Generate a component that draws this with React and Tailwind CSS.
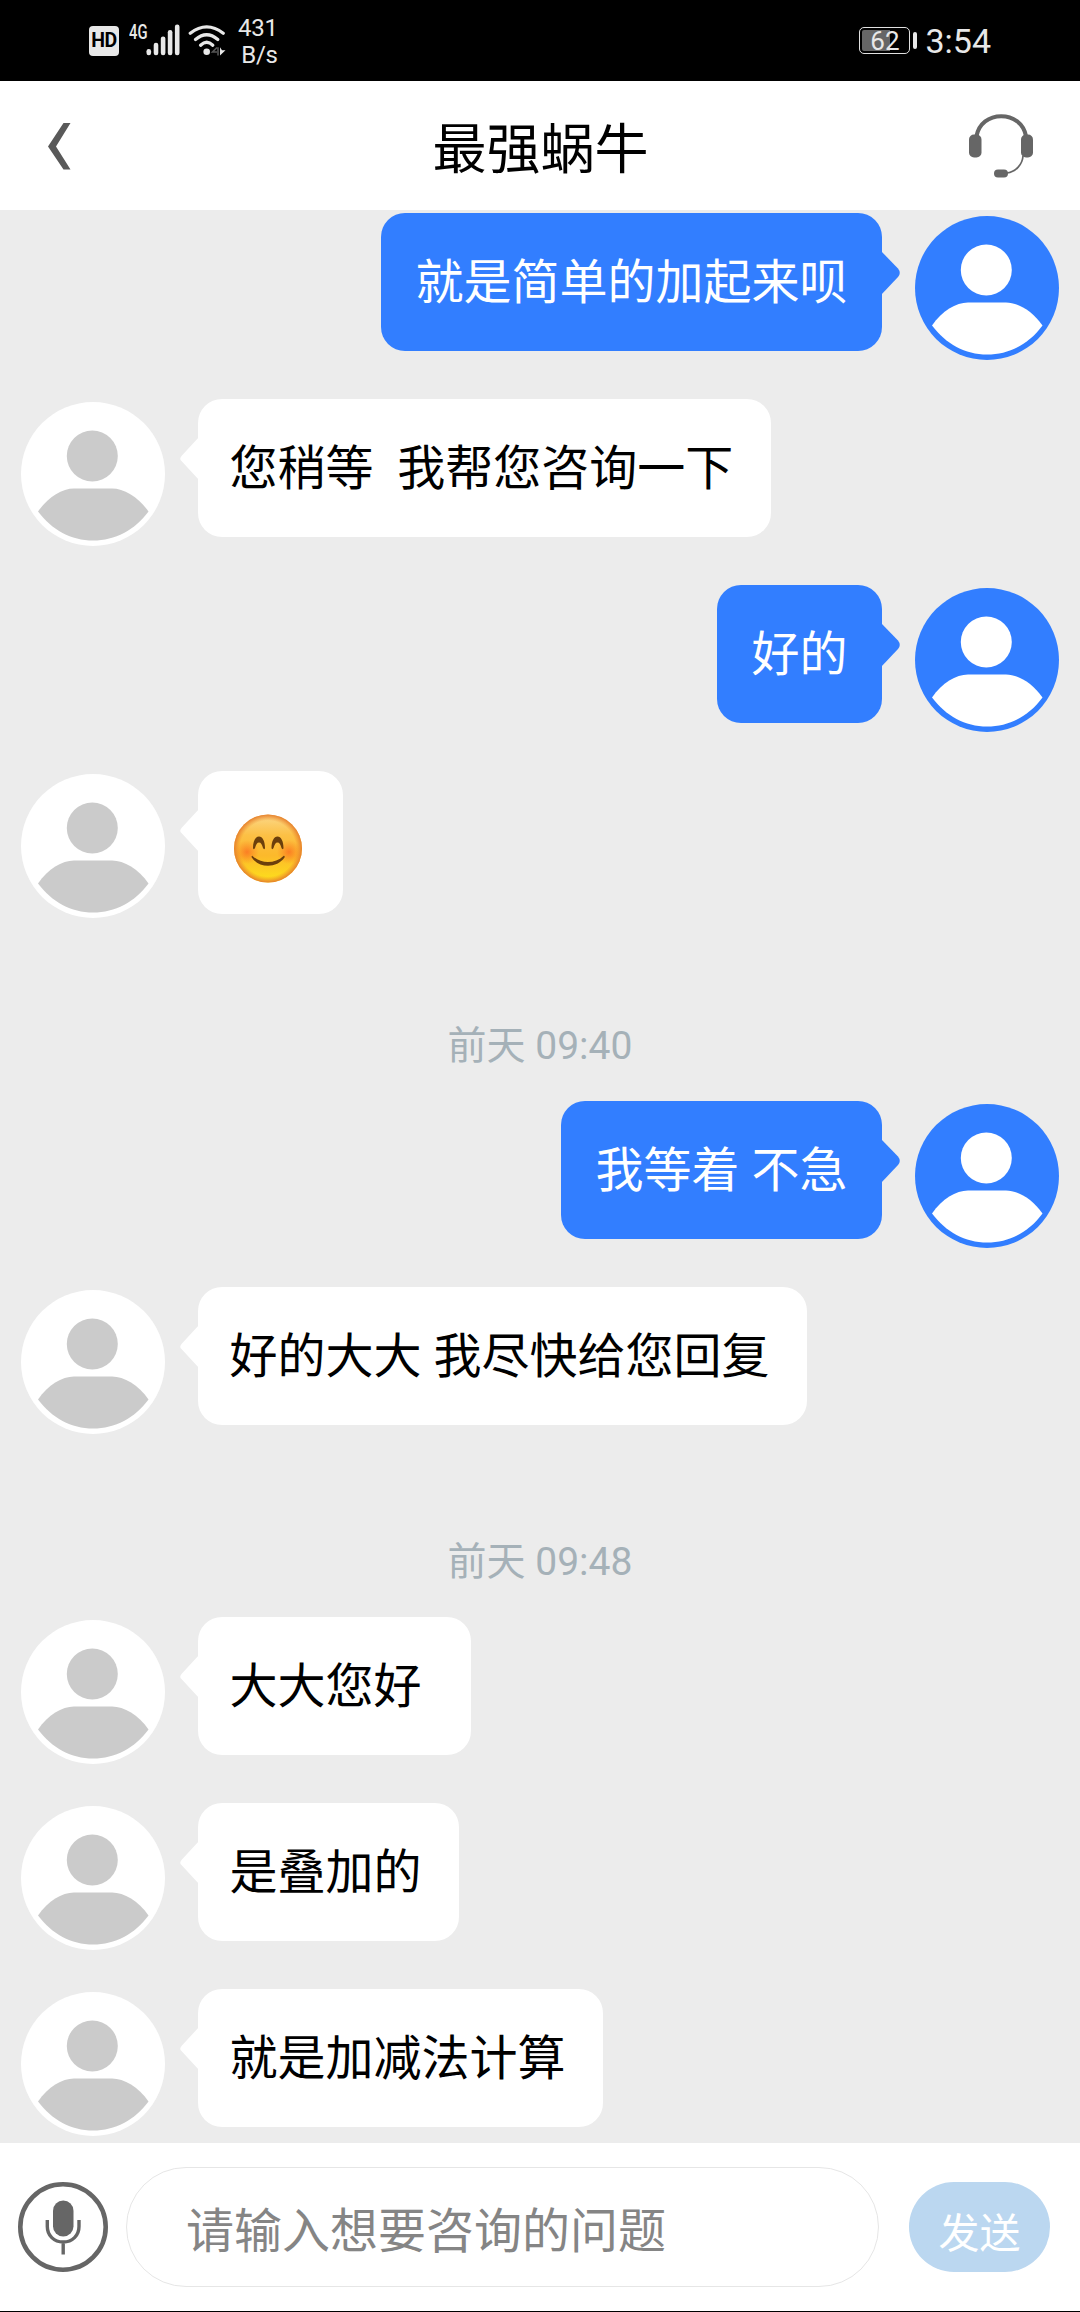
import clsx from "clsx";

const items = [
  { id: 1, type: "msg", mine: true, text: "就是简单的加起来呗" },
  { id: 2, type: "msg", text: "您稍等  我帮您咨询一下" },
  { id: 3, type: "msg", mine: true, text: "好的" },
  { id: 4, type: "emoji" },
  { id: 5, type: "time", text: "前天 09:40" },
  { id: 6, type: "msg", mine: true, text: "我等着 不急" },
  { id: 7, type: "msg", text: "好的大大 我尽快给您回复" },
  { id: 8, type: "time", text: "前天 09:48" },
  { id: 9, type: "msg", text: "大大您好 " },
  { id: 10, type: "msg", text: "是叠加的" },
  { id: 11, type: "msg", text: "就是加减法计算" },
];

function StatusBar() {
  return (
    <div className="flex h-[81px] shrink-0 justify-between bg-black pl-[89px] pr-[89px] text-[#e8e8e8]">
      <div className="flex">
        <div className="mt-[26px] flex h-[30px] w-[30px] items-center justify-center rounded-[4px] bg-[#e8e8e8] text-[19.5px] font-bold leading-none tracking-[-0.5px] text-black">
          HD
        </div>
        {/* signal + wifi */}
        <svg className="ml-[10px] mt-[20px] h-[40px] w-[100px]" viewBox="129 20 100 40">
          <text
            x="129"
            y="38.7"
            fontSize="20"
            fontWeight="500"
            textLength="18.5"
            lengthAdjust="spacingAndGlyphs"
            fill="#e8e8e8"
          >
            4G
          </text>
          <g fill="#e8e8e8">
            <rect x="146.5" y="49" width="4.6" height="6.3" rx="2.2" />
            <rect x="153.7" y="42.7" width="4.6" height="12.6" rx="2.2" />
            <rect x="160.8" y="36.5" width="4.6" height="18.8" rx="2.2" />
            <rect x="167.8" y="30" width="4.6" height="25.3" rx="2.2" />
            <rect x="174.9" y="24.5" width="4.6" height="30.8" rx="2.2" />
            <circle cx="206.7" cy="51.7" r="3.3" />
            <path d="M220 47.2 222 50.300H225.500L220 55.500Z" />
          </g>
          <path d="M218 47.2V55.5M217 47.5 212.5 52H217" stroke="#555" strokeWidth="1.6" fill="none" />
          <g fill="none" stroke="#e8e8e8" strokeWidth="3.3" strokeLinecap="round">
            <path d="M190.3 33.2Q206.7 20.5 223.2 33.2" />
            <path d="M195.5 39.4Q206.7 30 217.8 39.4" />
            <path d="M200.6 45.2Q206.7 39.3 212.8 45.2" />
          </g>
        </svg>
        <div className="ml-[9px] mt-[15px] text-right text-[24px] leading-[27px] tracking-[-0.3px]">
          <div>431</div>
          <div>B/s</div>
        </div>
      </div>
      <div className="flex">
        <div className="relative mt-[27px] flex h-[27px] w-[51px] rounded-[5px] border-[1.5px] border-[#e0e0e0] p-[2px]">
          <div className="w-[62%] rounded-l-[2px] bg-[#666]" />
          <span className="absolute inset-0 text-center text-[26px] leading-[26px]">62</span>
        </div>
        <div className="ml-[3px] mt-[32px] h-[17px] w-[4px] rounded-[2px] bg-[#e8e8e8]" />
        <span className="ml-[8px] mt-[21px] text-[34px] leading-[40px]">3:54</span>
      </div>
    </div>
  );
}

function Header() {
  return (
    <div className="flex h-[129px] shrink-0 items-center justify-between bg-white pl-[48px] pr-[47px]">
      <svg className="mt-[2px] h-[47px] w-[64px]" viewBox="0 0 64 47">
        <path d="M15.5 0H22.5L8 23.5 22.5 46.5H15.5L0 23.5Z" fill="#595959" />
      </svg>
      <h1 className="pt-[10px] text-[54px] leading-[64px] text-black">最强蜗牛</h1>
      <svg className="h-[64px] w-[64px]" viewBox="0 0 64 64">
        <g fill="#666">
          <rect x="0" y="20.5" width="12.5" height="23" rx="5" />
          <rect x="52" y="20.5" width="12" height="23" rx="5" />
          <rect x="25" y="55.5" width="14" height="8" rx="4" />
        </g>
        <path d="M7.5 22C10 9.5 20 2.2 32.2 2.2S54.5 9.5 57 22" stroke="#666" strokeWidth="4" fill="none" />
        <path d="M54 42C53.5 50 47 58 38 59" stroke="#666" strokeWidth="1.7" fill="none" />
      </svg>
    </div>
  );
}

function Avatar({ mine }) {
  return (
    <svg className="mt-[3px] h-[144px] w-[144px] shrink-0" viewBox="0 0 144 144">
      <circle cx="72" cy="72" r="72" fill={mine ? "#327eff" : "#fff"} />
      <g fill={mine ? "#fff" : "#cbcbcb"}>
        <circle cx="71.3" cy="54" r="25.5" />
        <path d="M17 109.5C27 95 41 86.5 53 86.5H91C103 86.5 117.5 95 127.5 109.5C114 128 94 138.5 72 138.5S31 128 17 109.5Z" />
      </g>
    </svg>
  );
}

function Smile() {
  return (
    <svg className="mb-[31px] ml-[36px] mr-[41px] mt-[43px] h-[69px] w-[68px]" viewBox="0 0 68 69">
      <defs>
        <linearGradient id="face" x1="0" y1="0" x2="0" y2="1">
          <stop offset="0" stopColor="#fbd98a" />
          <stop offset="0.3" stopColor="#fcc046" />
          <stop offset="0.6" stopColor="#fcb92b" />
          <stop offset="1" stopColor="#fde21a" />
        </linearGradient>
        <radialGradient id="rim">
          <stop offset="0.82" stopColor="#ef8a2c" stopOpacity="0" />
          <stop offset="1" stopColor="#e57f2e" />
        </radialGradient>
        <radialGradient id="blush">
          <stop offset="0" stopColor="#fb6a20" stopOpacity="0.75" />
          <stop offset="1" stopColor="#fb7a20" stopOpacity="0" />
        </radialGradient>
      </defs>
      <circle cx="34" cy="34.5" r="34" fill="url(#face)" />
      <circle cx="13" cy="38" r="12" fill="url(#blush)" />
      <circle cx="55" cy="38" r="12" fill="url(#blush)" />
      <circle cx="34" cy="34.5" r="34" fill="url(#rim)" />
      <g fill="#6b3f0c">
        <path d="M19 34C19 27 21.5 22.5 25 22.5S31 27 31 34C31 35.5 29.5 35.5 29 34C28 30.5 27 28.5 25 28.5S22 30.5 21 34C20.5 35.5 19 35.5 19 34Z" />
        <path d="M37.5 34C37.5 27 40 22.5 43.5 22.5S49.5 27 49.5 34C49.5 35.5 48 35.5 47.5 34C46.5 30.5 45.5 28.5 43.5 28.5S40.5 30.5 39.5 34C39 35.5 37.5 35.5 37.5 34Z" />
        <path d="M18.5 42C27 50 41 50 49.5 42C50.5 41.5 51 42.5 50.5 43.5C43 54.5 25 54.5 17.8 43.5C17.3 42.5 17.8 41.5 18.5 42Z" />
      </g>
    </svg>
  );
}

function Message({ item }) {
  const { mine } = item;
  return (
    <div
      className={clsx(
        "mb-[39px] flex h-[147px] shrink-0 items-start gap-[33px] px-[21px]",
        mine && "flex-row-reverse"
      )}
    >
      <Avatar mine={mine} />
      <div
        className={clsx(
          "relative rounded-[24px]",
          mine ? "bg-[#327eff] text-white" : "bg-white text-black"
        )}
      >
        {mine ? (
          <svg className="absolute -right-[18px] top-[38px] h-[44px] w-[19px]" viewBox="0 0 19 44">
            <path d="M0 0 17 17.5Q20.5 22 17 26L0 44Z" fill="#327eff" />
          </svg>
        ) : (
          <svg className="absolute -left-[18px] top-[38px] h-[44px] w-[19px]" viewBox="0 0 19 44">
            <path d="M19 0 1.5 19Q-1 22 1.5 24L19 43Z" fill="#fff" />
          </svg>
        )}
        {item.type === "emoji" ? (
          <Smile />
        ) : (
          <p
            className={clsx(
              "whitespace-pre pb-[40px] pt-[42px] text-[48px] leading-[56px]",
              mine ? "px-[34.5px]" : "pl-[31.5px] pr-[37.5px]"
            )}
          >
            {item.text}
          </p>
        )}
      </div>
    </div>
  );
}

export default function App() {
  return (
    <div className="flex h-[2312px] w-[1080px] flex-col overflow-hidden bg-[#ececec] font-['Roboto','Noto_Sans_CJK_SC',sans-serif]">
      <StatusBar />
      <Header />

      <div className="flex min-h-0 flex-1 flex-col overflow-hidden pt-[3px]">
        {items.map((item) =>
          item.type === "time" ? (
            <div
              key={item.id}
              className="mb-[31px] mt-[65px] h-[48px] shrink-0 text-center text-[39px] leading-[48px] text-[#a5b1b8]"
            >
              {item.text}
            </div>
          ) : (
            <Message key={item.id} item={item} />
          )
        )}
      </div>

      <div className="flex h-[169px] shrink-0 items-center border-b border-black bg-white pl-[18px] pr-[30px]">
        <svg className="h-[90px] w-[90px]" viewBox="0 0 90 90">
          <circle cx="45" cy="45" r="42.7" stroke="#666" strokeWidth="4.6" fill="none" />
          <rect x="35" y="18.5" width="20.5" height="36" rx="10.25" fill="#666" />
          <path
            d="M29.3 38V44.5C29.3 53.5 36 60 45.2 60S61 53.5 61 44.5V38M45.2 60V72.5"
            stroke="#666"
            strokeWidth="3.4"
            fill="none"
          />
        </svg>
        <input
          className="ml-[18px] h-[120px] w-[753px] rounded-full border-[1.5px] border-[#e6e6e6] pl-[59px] pt-[8px] text-[48px] text-black outline-none placeholder:text-[#858585]"
          placeholder="请输入想要咨询的问题"
        />
        <button className="ml-[30px] h-[90px] w-[141px] rounded-full bg-[#bbd7f0] pt-[13px] text-[41px] leading-[48px] text-white">
          发送
        </button>
      </div>
    </div>
  );
}
